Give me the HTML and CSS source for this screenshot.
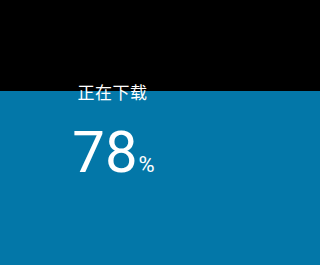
FILE: index.html
```html
<!DOCTYPE html>
<html lang="zh">
<head>
<meta charset="utf-8">
<link rel="stylesheet" href="styles.css">
</head>
<body>
<div class="screen">
  <div class="label">正在下载</div>
  <div class="value"><span class="num">78</span><span class="pct">%</span></div>
</div>
</body>
</html>
```

FILE: styles.css
```css
html, body {
  margin: 0;
  padding: 0;
}
body {
  min-height: 265px;
  background: linear-gradient(#000 0, #000 91px, #0377a8 91px, #0377a8 100%);
}
.screen {
  box-sizing: border-box;
  width: 225px;
  height: 265px;
  display: flex;
  flex-direction: column;
  align-items: center;
  padding-top: 83px;
  color: #fff;
}
.label {
  font-family: "Noto Sans CJK SC", "Noto Sans", sans-serif;
  font-size: 17px;
  line-height: 17px;
  letter-spacing: 0.5px;
}
.value {
  margin-top: 23px;
  padding-left: 2px;
  font-family: Roboto, "Liberation Sans", sans-serif;
  line-height: 58px;
  display: flex;
  align-items: baseline;
  gap: 1px;
}
.num {
  font-size: 58px;
  font-weight: 400;
}
.pct {
  font-size: 22px;
}
```
